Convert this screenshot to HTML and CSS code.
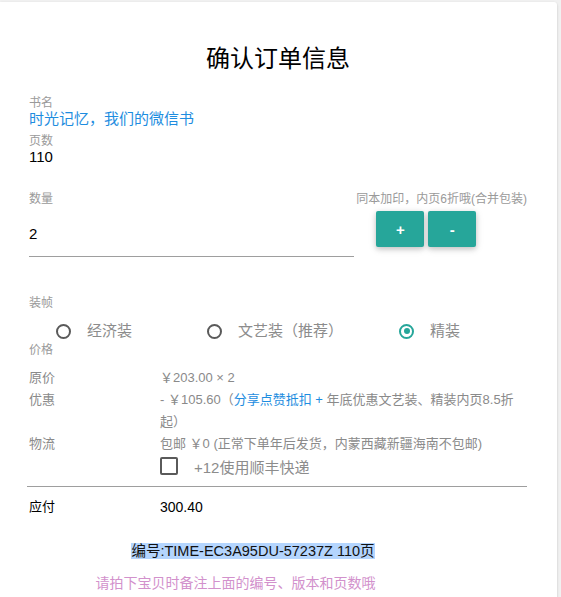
FILE: index.html
```html
<!DOCTYPE html>
<html lang="zh">
<head>
<meta charset="utf-8">
<title>确认订单信息</title>
<link rel="stylesheet" href="styles.css">
</head>
<body>
<div class="card">
  <h1 class="title">确认订单信息</h1>

  <div class="label">书名</div>
  <div class="book">时光记忆，我们的微信书</div>
  <div class="label label-pages">页数</div>
  <div class="value-dark">110</div>

  <div class="qty-row">
    <div class="qty-left">
      <div class="label">数量</div>
      <div class="qty-input">2</div>
    </div>
    <div class="qty-right">
      <div class="note">同本加印，内页6折哦(合并包装)</div>
      <div class="btns">
        <button class="btn">+</button>
        <button class="btn">-</button>
      </div>
    </div>
  </div>

  <div class="label label-binding">装帧</div>
  <div class="radios">
    <div class="radio radio-1"><span class="circle"></span><span class="rtext">经济装</span></div>
    <div class="radio radio-2"><span class="circle"></span><span class="rtext">文艺装（推荐）</span></div>
    <div class="radio"><span class="circle checked"></span><span class="rtext">精装</span></div>
  </div>
  <div class="label">价格</div>

  <div class="prices">
    <div class="prow">
      <div class="pkey">原价</div>
      <div class="pval">￥203.00 × 2</div>
    </div>
    <div class="prow">
      <div class="pkey">优惠</div>
      <div class="pval"><span>- ￥105.60（</span><span class="blue">分享点赞抵扣 +</span><span> 年底优惠文艺装、精装内页8.5折起）</span></div>
    </div>
    <div class="prow">
      <div class="pkey">物流</div>
      <div class="pval">包邮 ￥0 (正常下单年后发货，内蒙西藏新疆海南不包邮)
        <div class="check-row"><span class="checkbox"></span><span class="ctext">+12使用顺丰快递</span></div>
      </div>
    </div>
  </div>

  <div class="divider"></div>

  <div class="prow total">
    <div class="pkey">应付</div>
    <div class="pval">300.40</div>
  </div>

  <div class="code-line"><span class="code">编号:TIME-EC3A95DU-57237Z 110页</span></div>
  <div class="hint">请拍下宝贝时备注上面的编号、版本和页数哦</div>
</div>
</body>
</html>
```

FILE: styles.css
```css
html, body {
  margin: 0;
  padding: 0;
}
body {
  background: #f1f1f1;
  font-family: "Liberation Sans", "Noto Sans CJK SC", sans-serif;
  color: #000;
}
.card {
  background: #fff;
  margin: 2px 4px 0 0;
  border-radius: 0 3px 0 0;
  box-shadow: 0 1px 3px rgba(0,0,0,0.12), 0 1px 2px rgba(0,0,0,0.08);
  padding: 42px 30px 20px 29px;
  min-height: 560px;
}
.title {
  margin: 0 0 22px 0;
  font-size: 24px;
  line-height: 30px;
  font-weight: normal;
  text-align: center;
}
.label {
  font-size: 12px;
  line-height: 14px;
  color: #9a9a9a;
}
.book {
  font-size: 15px;
  line-height: 18px;
  color: #1e8de0;
}
.label-pages {
  margin-top: 6px;
}
.value-dark {
  font-size: 15px;
  line-height: 18px;
  color: #000;
}
.qty-row {
  display: flex;
  justify-content: space-between;
  margin-top: 26px;
}
.qty-left {
  width: 325px;
  margin-left: -2px;
  padding-left: 2px;
}
.qty-input {
  height: 31px;
  padding-top: 19px;
  font-size: 15px;
  line-height: 18px;
  border-bottom: 1px solid #9e9e9e;
  box-sizing: content-box;
}
.qty-right {
  display: flex;
  flex-direction: column;
}
.note {
  font-size: 12px;
  line-height: 14px;
  color: #9a9a9a;
}
.btns {
  display: flex;
  gap: 4px;
  margin-top: 5px;
  padding-left: 20px;
}
.btn {
  width: 48px;
  height: 36px;
  border: none;
  border-radius: 2px;
  background: #26a69a;
  color: #fff;
  font-family: "Liberation Sans", sans-serif;
  font-size: 15px;
  font-weight: bold;
  padding: 0;
  box-shadow: 0 2px 5px rgba(0,0,0,0.16), 0 2px 8px rgba(0,0,0,0.12);
}
.label-binding {
  margin-top: 39px;
}
.radios {
  display: flex;
  align-items: center;
  height: 22px;
  margin: 10px 0 1px 27px;
}
.radio {
  display: flex;
  align-items: center;
}
.radio-1 { width: 151px; }
.radio-2 { width: 192px; }
.circle {
  width: 15px;
  height: 15px;
  box-sizing: border-box;
  border: 2px solid #5a5a5a;
  border-radius: 50%;
  margin-right: 16px;
  position: relative;
}
.circle.checked {
  border-color: #26a69a;
}
.circle.checked::after {
  content: "";
  position: absolute;
  left: 2.5px;
  top: 2.5px;
  width: 6px;
  height: 6px;
  border-radius: 50%;
  background: #26a69a;
}
.rtext {
  font-size: 15px;
  line-height: 22px;
  color: #8c8c8c;
}
.prices {
  margin-top: 10px;
}
.prow {
  display: flex;
  font-size: 13px;
  line-height: 22px;
}
.pkey {
  width: 131px;
  flex: none;
  color: #8a8a8a;
}
.pval {
  flex: 1;
  color: #8a8a8a;
}
.blue {
  color: #1e8de0;
}
.check-row {
  display: flex;
  align-items: center;
  height: 22px;
}
.checkbox {
  width: 18px;
  height: 18px;
  box-sizing: border-box;
  border: 2px solid #5a5a5a;
  border-radius: 2px;
  margin-right: 16px;
}
.ctext {
  font-size: 15px;
  line-height: 22px;
  color: #8c8c8c;
  position: relative;
  top: 2px;
}
.divider {
  margin: 9px 0 0 -2px;
  border-top: 1px solid #9e9e9e;
}
.total {
  margin-top: 9px;
}
.total .pkey,
.total .pval {
  color: #000;
}
.total .pval {
  font-size: 14px;
}
.code-line {
  margin-top: 24px;
  padding-right: 50px;
  text-align: center;
  font-size: 14.5px;
  line-height: 18px;
}
.code {
  background: #b4d5fe;
  color: #111;
}
.hint {
  margin-top: 14px;
  padding-right: 85px;
  text-align: center;
  font-size: 14px;
  line-height: 18px;
  color: #d291cc;
}
```
